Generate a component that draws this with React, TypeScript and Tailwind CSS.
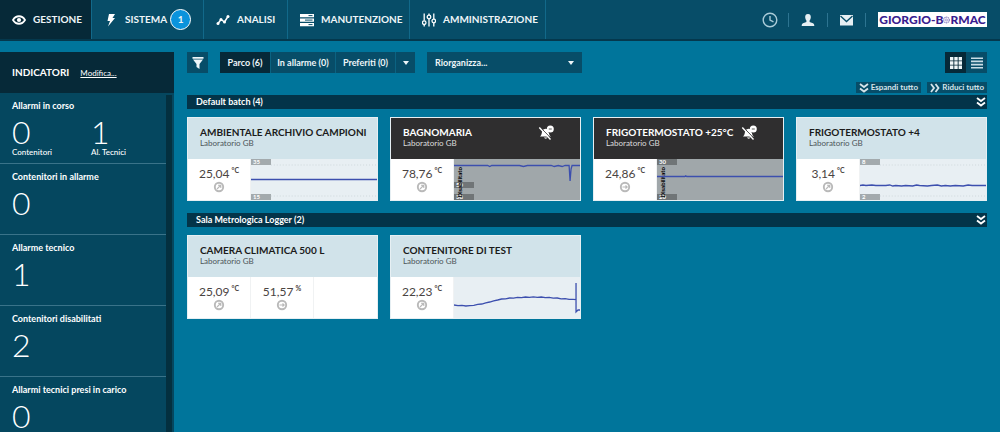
import type { ReactNode } from 'react';
import clsx from 'clsx';

type Reading = { value: string; unit: string; icon: 'trend' | 'steady' };

type Chart = {
    line: string;
    limits?: { label: string; className: string }[];
    guides?: boolean;
};

type Container = {
    name: string;
    lab: string;
    readings: Reading[];
    disabled?: boolean;
    chart?: Chart;
};

const navItems = [
    { label: 'GESTIONE', icon: 'eye', className: 'w-[92px] bg-[#062938] pl-3' },
    { label: 'SISTEMA', icon: 'bolt', className: 'w-[112px] pl-3', badge: 1 },
    { label: 'ANALISI', icon: 'chart', className: 'w-[84px] pl-3' },
    { label: 'MANUTENZIONE', icon: 'server', className: 'w-[122px] pl-3' },
    { label: 'AMMINISTRAZIONE', icon: 'sliders', className: 'w-[136px] pl-3' },
];

const indicators = [
    { title: 'Allarmi in corso', counts: [{ value: 0, label: 'Contenitori' }, { value: 1, label: 'Al. Tecnici' }] },
    { title: 'Contenitori in allarme', counts: [{ value: 0 }] },
    { title: 'Allarme tecnico', counts: [{ value: 1 }] },
    { title: 'Contenitori disabilitati', counts: [{ value: 2 }] },
    { title: 'Allarmi tecnici presi in carico', counts: [{ value: 0 }] },
];

const groups: { title: string; containers: Container[] }[] = [
    {
        title: 'Default batch (4)',
        containers: [
            {
                name: 'AMBIENTALE ARCHIVIO CAMPIONI',
                lab: 'Laboratorio GB',
                readings: [{ value: '25,04', unit: '°C', icon: 'trend' }],
                chart: {
                    line: 'M0 20.5H127',
                    guides: true,
                    limits: [{ label: '35', className: 'top-0' }, { label: '15', className: 'bottom-0' }],
                },
            },
            {
                name: 'BAGNOMARIA',
                lab: 'Laboratorio GB',
                disabled: true,
                readings: [{ value: '78,76', unit: '°C', icon: 'trend' }],
                chart: {
                    line: 'M0 6.5H34L36 7.5L38 6.5H66L70 7.5L74 6.5H98L101 7.5L105 6.5L109 7.5L112 6.5H116L117 22L118 10L119 6.5H127',
                    limits: [{ label: '50', className: 'bottom-3' }, { label: '38', className: 'bottom-0' }],
                },
            },
            {
                name: 'FRIGOTERMOSTATO +25°C',
                lab: 'Laboratorio GB',
                disabled: true,
                readings: [{ value: '24,86', unit: '°C', icon: 'steady' }],
                chart: {
                    line: 'M0 17.5H28L29 16.8L30 17.5H127',
                    limits: [{ label: '30', className: 'top-0' }, { label: '20', className: 'bottom-0' }],
                },
            },
            {
                name: 'FRIGOTERMOSTATO +4',
                lab: 'Laboratorio GB',
                readings: [{ value: '3,14', unit: '°C', icon: 'trend' }],
                chart: {
                    line: 'M0 26.5L3 26L6 26.5L12 26L16 26.5H26L30 26L33 27L36 26.5L42 27L46 26.5L53 27L57 26L60 26.5L68 27L72 26.5L78 26L82 27L86 26.5L91 27L96 26.5L104 27L109 26L113 26.5H127',
                    guides: true,
                    limits: [{ label: '8', className: 'top-0' }, { label: '2', className: 'bottom-0' }],
                },
            },
        ],
    },
    {
        title: 'Sala Metrologica Logger (2)',
        containers: [
            {
                name: 'CAMERA CLIMATICA 500 L',
                lab: 'Laboratorio GB',
                readings: [
                    { value: '25,09', unit: '°C', icon: 'trend' },
                    { value: '51,57', unit: '%', icon: 'steady' },
                ],
            },
            {
                name: 'CONTENITORE DI TEST',
                lab: 'Laboratorio GB',
                readings: [{ value: '22,23', unit: '°C', icon: 'trend' }],
                chart: {
                    line: 'M0 28L4 28.6L8 28.4L12 29L16 28.6L20 28.4L24 27.4L28 27L32 25.8L36 25L40 23.8L44 23L48 22L52 21.8L56 21L60 21.2L64 20.4L68 20.6L72 20L76 20.4L80 19.8L84 20.4L88 20L92 20.6L96 20.4L100 21.2L104 21L108 21.8L112 21.6L116 22.4L120 22.4L123 22.6V6V35L125 33L127 33',
                },
            },
        ],
    },
];

const NavIcon = ({ name }: { name: string }) => {
    const shapes: Record<string, ReactNode> = {
        eye: (
            <>
                <path d="M1 7C4 2 10 2 13 7C10 12 4 12 1 7Z" fill="none" stroke="currentColor" strokeWidth="1.8" />
                <circle cx="7" cy="7" r="2.1" />
            </>
        ),
        bolt: <path d="M5 1H11L8.5 5H11L4 13.5L6 8H3.5Z" />,
        chart: (
            <>
                <path d="M2 10.5L5 6.5L8.5 9L12 3.5" fill="none" stroke="currentColor" strokeWidth="1.5" />
                <circle cx="2" cy="10.5" r="1.5" />
                <circle cx="5" cy="6.5" r="1.5" />
                <circle cx="8.5" cy="9" r="1.5" />
                <circle cx="12" cy="3.5" r="1.5" />
            </>
        ),
        server: (
            <>
                <path d="M0 1H14V4.2H0ZM0 5.5H14V8.7H0ZM0 10H14V13.2H0Z" />
                <path d="M8.5 2.6H12.5M5 7.1H12.5M8.5 11.6H12.5" stroke="#074d68" />
            </>
        ),
        sliders: (
            <g fill="none" stroke="currentColor" strokeWidth="1.3">
                <path d="M2.2 0.5V7.5M2.2 12V13.5M7 0.5V2M7 6V13.5M11.8 0.5V6M11.8 10V13.5" />
                <circle cx="2.2" cy="9.7" r="1.8" />
                <circle cx="7" cy="4" r="1.8" />
                <circle cx="11.8" cy="8" r="1.8" />
            </g>
        ),
    };

    return (
        <svg viewBox="0 0 14 14" className="size-3.5 shrink-0 text-white" fill="currentColor" aria-hidden="true">
            {shapes[name]}
        </svg>
    );
};

const DoubleChevron = ({ className }: { className?: string }) => (
    <svg viewBox="0 0 10 10" className={clsx('size-2.5 shrink-0', className)} fill="none" stroke="currentColor" strokeWidth="1.8" aria-hidden="true">
        <path d="M1 1L5 4L9 1M1 5.5L5 8.5L9 5.5" />
    </svg>
);

const Caret = ({ className }: { className?: string }) => (
    <svg viewBox="0 0 6 4" className={clsx('h-1 w-1.5', className)} fill="currentColor" aria-hidden="true">
        <path d="M0 0H6L3 4Z" />
    </svg>
);

const MutedBell = () => (
    <svg viewBox="0 0 16 16" className="-mt-px size-4 shrink-0 text-white" fill="currentColor" aria-hidden="true">
        <path d="M2 11.5C4 10 3.5 7.5 4.5 5.5C5.5 3.8 8 3 9.5 4.2C10 7 11 7.5 11.2 9C11.4 10.5 12 11 13 11.5ZM6 12.5H9.5C9 14 6.5 14 6 12.5Z" />
        <path d="M2.2 2L13.5 14" stroke="#2f2e2f" />
        <path d="M1.3 2.5L12.5 14.5" stroke="currentColor" strokeWidth="1.4" />
        <circle cx="12.3" cy="4" r="3.5" />
        <path d="M10.8 4H13.8" stroke="#2f2e2f" strokeWidth="0.8" />
    </svg>
);

const StatusIcon = ({ icon }: { icon: Reading['icon'] }) => (
    <svg viewBox="0 0 12 12" className="size-3 text-[#b9b9b9]" fill="none" stroke="currentColor" aria-hidden="true">
        <circle cx="6" cy="6" r="4.2" strokeWidth="1.9" />
        {icon === 'trend' ? (
            <path d="M4 8L7.5 4.5M5 4.3H7.8V7" strokeWidth="1.1" />
        ) : (
            <path d="M3.5 6H8M6.5 4.5L8.2 6L6.5 7.5" strokeWidth="1.1" />
        )}
    </svg>
);

const Header = () => (
    <header className="flex h-[41px] shrink-0 items-stretch justify-between border-b-2 border-[#04384d] bg-[#074d68]">
        <nav className="flex">
            {navItems.map((item) => (
                <a
                    key={item.label}
                    href="#"
                    className={clsx('flex items-center gap-[7px] border-r border-[#12698a] text-[10px] font-bold text-[#eef5f8]', item.className)}
                >
                    <NavIcon name={item.icon} />
                    {item.label}
                    {item.badge && (
                        <span className="-ml-1 flex size-[21px] shrink-0 items-center justify-center rounded-full border border-white bg-[#0a93dc] font-bold">
                            {item.badge}
                        </span>
                    )}
                </a>
            ))}
        </nav>

        <div className="flex items-center pr-[13px]">
            <button type="button" aria-label="Cronologia" className="pr-2.5 text-[#a9cbd8]">
                <svg viewBox="0 0 16 16" className="size-4" fill="none" stroke="currentColor" strokeWidth="1.4">
                    <circle cx="8" cy="8" r="6.8" />
                    <path d="M8 4V8L11.5 9.8" />
                </svg>
            </button>
            <button type="button" aria-label="Profilo" className="border-l border-[#2d7491] px-3 text-[#e6eff3]">
                <svg viewBox="0 0 14 14" className="size-3.5" fill="currentColor">
                    <path d="M7 1C9.3 1 10 2.6 9.8 4.5C9.6 6 9 7 8.6 7.6V9L12 10.2C13 10.7 13.2 11.5 13.3 13H0.7C0.8 11.5 1 10.7 2 10.2L5.4 9V7.6C5 7 4.4 6 4.2 4.5C4 2.6 4.7 1 7 1Z" />
                </svg>
            </button>
            <button type="button" aria-label="Messaggi" className="border-x border-[#2d7491] px-3 text-[#e6eff3]">
                <svg viewBox="0 0 13 14" className="h-3.5 w-[13px]" fill="currentColor">
                    <path d="M0 2H13V12.5H0Z" />
                    <path d="M0.5 3L6.5 8.5L12.5 3" fill="none" stroke="#074d68" strokeWidth="1.3" />
                </svg>
            </button>
            <a href="#" className="ml-3 flex h-[15px] w-[109px] items-center justify-center bg-white text-[12px] leading-[15px] font-black text-[#3a1d8f]">
                GIORGIO-B
                <svg viewBox="0 0 9 12" className="h-3 w-[7px]" fill="none" stroke="#8f83c4" aria-hidden="true">
                    <circle cx="4.5" cy="6" r="3.6" strokeWidth="1.6" strokeDasharray="1.6 0.7" />
                    <circle cx="4.5" cy="6" r="1.3" />
                </svg>
                RMAC
            </a>
        </div>
    </header>
);

const Sidebar = () => (
    <aside className="flex w-[174px] shrink-0 flex-col overflow-hidden bg-[#05475f] text-white">
        <div className="flex h-[41px] shrink-0 items-center gap-[11px] bg-[#062938] px-3">
            <h2 className="text-[10px] font-bold">INDICATORI</h2>
            <a href="#" className="text-[8px] underline">Modifica...</a>
        </div>
        <div className="flex min-h-0 flex-1">
            <div className="min-w-0 flex-1">
                {indicators.map((indicator) => (
                    <section key={indicator.title} className="h-[71px] border-b border-[#3a7389] px-3 pt-[7px]">
                        <h3 className="text-[9px] leading-3 font-bold whitespace-nowrap">{indicator.title}</h3>
                        <div className="grid grid-cols-[79px_auto]">
                            {indicator.counts.map((count) => (
                                <div key={count.value}>
                                    <div className="pt-1 text-[32px] leading-8 font-light">{count.value}</div>
                                    {'label' in count && <div className="text-[8px] leading-2 font-medium">{count.label}</div>}
                                </div>
                            ))}
                        </div>
                    </section>
                ))}
            </div>
            <div className="mt-0.5 mr-0.5 w-1.5 shrink-0 bg-[#04303f]" />
        </div>
    </aside>
);

const Toolbar = () => (
    <div className="flex h-[21px] justify-between text-[9px] font-bold text-[#eef5f8]">
        <div className="flex">
            <button type="button" aria-label="Filtra" className="flex w-[21px] items-center justify-center bg-[#074d68]">
                <svg viewBox="0 0 12 14" className="h-3.5 w-3" fill="currentColor">
                    <path d="M0.5 1H11.5V2.8H0.5ZM1 3.6H11L7.5 8V13L4.5 11V8Z" />
                </svg>
            </button>
            <div className="ml-3 flex divide-x divide-[#0b6382] bg-[#074d68]">
                <button type="button" className="w-[51px] bg-[#062938]">Parco (6)</button>
                <button type="button" className="w-[65px]">In allarme (0)</button>
                <button type="button" className="w-[60px]">Preferiti (0)</button>
                <button type="button" aria-label="Altri filtri" className="flex w-[19px] items-center justify-center">
                    <Caret />
                </button>
            </div>
            <div className="ml-3 grid w-[155px] items-center bg-[#074d68]">
                <select aria-label="Riorganizza" className="col-start-1 row-start-1 h-full appearance-none px-2 outline-none">
                    <option>Riorganizza...</option>
                </select>
                <Caret className="pointer-events-none col-start-1 row-start-1 mr-2 justify-self-end" />
            </div>
        </div>
        <div className="flex">
            <button type="button" aria-label="Griglia" className="flex w-[21px] items-center justify-center bg-[#062938]">
                <svg viewBox="0 0 12 12" className="size-3" fill="currentColor">
                    <path d="M0 0H3.4V3.4H0ZM4.3 0H7.7V3.4H4.3ZM8.6 0H12V3.4H8.6ZM0 4.3H3.4V7.7H0ZM4.3 4.3H7.7V7.7H4.3ZM8.6 4.3H12V7.7H8.6ZM0 8.6H3.4V12H0ZM4.3 8.6H7.7V12H4.3ZM8.6 8.6H12V12H8.6Z" />
                </svg>
            </button>
            <button type="button" aria-label="Elenco" className="flex w-[21px] items-center justify-center bg-[#074d68]">
                <svg viewBox="0 0 12 12" className="size-3 text-[#c9dde5]" fill="currentColor">
                    <path d="M0 0.4H12V2H0ZM0 3.6H12V5.2H0ZM0 6.8H12V8.4H0ZM0 10H12V11.6H0Z" />
                </svg>
            </button>
        </div>
    </div>
);

const ChartView = ({ chart, disabled }: { chart: Chart; disabled?: boolean }) => (
    <div className={clsx('relative min-w-0 flex-1 overflow-hidden', disabled ? 'bg-[#a0a7aa]' : 'bg-[#e8eff3]')}>
        {chart.limits?.map((limit) => (
            <span
                key={limit.label}
                className={clsx(
                    'absolute left-0 h-1.5 w-5 px-0.5 text-[6px] leading-1.5 font-bold text-white',
                    disabled ? 'bg-[#707577]' : 'bg-[#a3aaad]',
                    limit.className,
                )}
            >
                {limit.label}
            </span>
        ))}
        {disabled && (
            <span className="absolute bottom-0.5 left-0.5 rotate-180 text-[6px] leading-2 font-bold whitespace-nowrap text-black [writing-mode:vertical-rl]">
                Disabilitato
            </span>
        )}
        <svg viewBox="0 0 127 41" preserveAspectRatio="none" className="absolute inset-0 size-full" fill="none" aria-hidden="true">
            {chart.guides && <path d="M20 6H127M20 37H127" stroke="#cfd8dc" strokeDasharray="1 2" />}
            <path d={chart.line} stroke="#3c4fae" strokeWidth="1.3" vectorEffect="non-scaling-stroke" />
        </svg>
    </div>
);

const ContainerCard = ({ container }: { container: Container }) => (
    <article className="border border-[#e6eff3] bg-white">
        <div
            className={clsx(
                'flex h-[41px] justify-between pt-2 pr-[26px] pl-3',
                container.disabled ? 'bg-[#2f2e2f] text-white' : 'bg-[#d1e3ea] text-[#1b1b1b]',
            )}
        >
            <div>
                <h3 className="text-[10px] leading-[13px] font-bold whitespace-nowrap">{container.name}</h3>
                <p className={clsx('text-[8px] leading-2', container.disabled ? 'text-[#dddddd]' : 'text-[#4c5659]')}>{container.lab}</p>
            </div>
            {container.disabled && <MutedBell />}
        </div>
        <div className="flex h-[41px]">
            {container.readings.map((reading) => (
                <div key={reading.value} className="flex w-[63px] shrink-0 flex-col items-center border-r border-[#f0f2f3] pt-[7px]">
                    <div className="flex items-start text-[12px] leading-[15px] text-[#4a4442]">
                        {reading.value}
                        <span className="ml-0.5 text-[7px] leading-2 font-bold">{reading.unit}</span>
                    </div>
                    <StatusIcon icon={reading.icon} />
                </div>
            ))}
            {container.chart ? (
                <ChartView chart={container.chart} disabled={container.disabled} />
            ) : (
                <div className="flex-1" />
            )}
        </div>
    </article>
);

const App = () => {
    return (
        <div className="flex h-screen flex-col overflow-hidden bg-[#00759b] font-['Lato',sans-serif]">
            <Header />
            <div className="flex min-h-0 flex-1 pt-[11px]">
                <Sidebar />
                <main className="min-w-0 flex-1 px-[13px]">
                    <Toolbar />
                    <div className="mt-[9px] flex justify-end gap-1.5 text-[8px] leading-[11px] font-bold text-[#d5e4ea]">
                        <button type="button" className="flex w-[65px] items-center justify-between bg-[#074d68] px-[3px]">
                            <DoubleChevron />
                            Espandi tutto
                        </button>
                        <button type="button" className="flex w-[60px] items-center justify-between bg-[#074d68] px-[3px]">
                            <DoubleChevron className="-rotate-90" />
                            Riduci tutto
                        </button>
                    </div>
                    <div className="mt-0.5 flex flex-col gap-3">
                        {groups.map((group) => (
                            <section key={group.title}>
                                <div className="flex h-[14px] items-center justify-between bg-[#033449] pr-[1px] pl-[9px] text-white">
                                    <h2 className="text-[9px] leading-3 font-bold">{group.title}</h2>
                                    <button type="button" aria-label={`Comprimi ${group.title}`}>
                                        <DoubleChevron />
                                    </button>
                                </div>
                                <div className="mt-2 grid grid-cols-4 gap-3">
                                    {group.containers.map((container) => (
                                        <ContainerCard key={container.name} container={container} />
                                    ))}
                                </div>
                            </section>
                        ))}
                    </div>
                </main>
            </div>
        </div>
    );
};

export default App;
